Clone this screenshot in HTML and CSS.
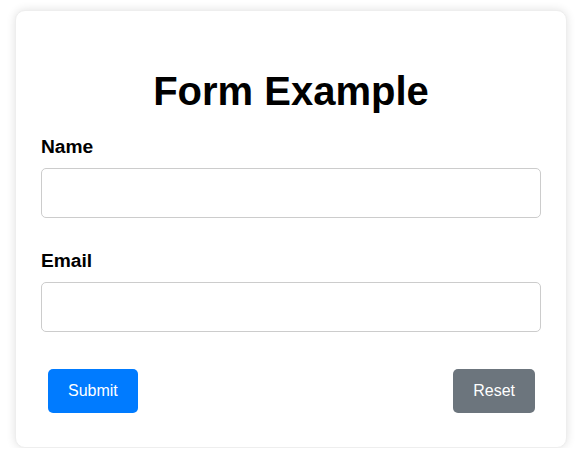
FILE: index.html
```html
<!DOCTYPE html>
<html lang="en">
<head>
<meta charset="utf-8">
<title>Form Example</title>
<link rel="stylesheet" href="styles.css">
</head>
<body>
  <div class="card">
    <h1 class="title">Form Example</h1>
    <form class="form">
      <div class="field">
        <label class="label" for="name">Name</label>
        <input class="input" type="text" id="name">
      </div>
      <div class="field">
        <label class="label" for="email">Email</label>
        <input class="input" type="email" id="email">
      </div>
      <div class="actions">
        <button type="submit" class="btn btn-primary">Submit</button>
        <button type="reset" class="btn btn-secondary">Reset</button>
      </div>
    </form>
  </div>
</body>
</html>
```

FILE: styles.css
```css
html, body {
  margin: 0;
  padding: 0;
  background: #fff;
}
body {
  font-family: "Liberation Sans", Arial, sans-serif;
  padding: 10px 20px 0 15px;
}
.card {
  width: 552px;
  box-sizing: border-box;
  padding: 30px 25px 34px 25px;
  border-radius: 10px;
  background: #fff;
  box-shadow: 0 0 10px rgba(0, 0, 0, 0.12);
  border: 1px solid #eee;
}
.title {
  margin: 27px 0 22px;
  font-size: 40px;
  font-weight: bold;
  text-align: center;
  color: #000;
  line-height: 46px;
}
.form {
  display: flex;
  flex-direction: column;
}
.field {
  display: flex;
  flex-direction: column;
  margin-bottom: 32px;
}
.label {
  font-size: 19.2px;
  font-weight: bold;
  line-height: 22px;
  margin-bottom: 10px;
  color: #000;
}
.input {
  box-sizing: border-box;
  width: 100%;
  height: 50px;
  border: 1px solid #ccc;
  border-radius: 5px;
  padding: 10px;
  font-size: 16px;
  font-family: inherit;
}
.actions {
  display: flex;
  justify-content: space-between;
  padding: 5px 6px 0 7px;
}
.btn {
  border: none;
  border-radius: 5px;
  color: #fff;
  font-family: "Liberation Sans", Arial, sans-serif;
  font-size: 16px;
  height: 44px;
  padding: 0 20px;
}
.btn-primary {
  background: #007bff;
}
.btn-secondary {
  background: #6c757d;
}
```
